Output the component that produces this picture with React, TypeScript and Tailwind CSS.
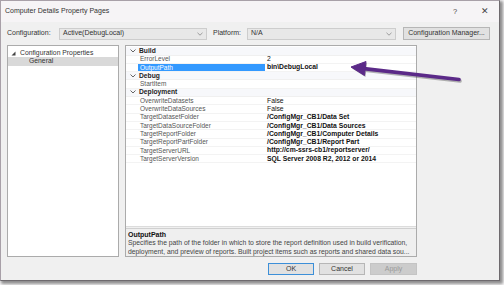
import React from "react";

const rows: { kind: "cat" | "prop"; name: string; value?: string; bold?: boolean; selected?: boolean }[] = [
  { kind: "cat", name: "Build" },
  { kind: "prop", name: "ErrorLevel", value: "2" },
  { kind: "prop", name: "OutputPath", value: "bin\\DebugLocal", bold: true, selected: true },
  { kind: "cat", name: "Debug" },
  { kind: "prop", name: "StartItem", value: "" },
  { kind: "cat", name: "Deployment" },
  { kind: "prop", name: "OverwriteDatasets", value: "False" },
  { kind: "prop", name: "OverwriteDataSources", value: "False" },
  { kind: "prop", name: "TargetDatasetFolder", value: "/ConfigMgr_CB1/Data Set", bold: true },
  { kind: "prop", name: "TargetDataSourceFolder", value: "/ConfigMgr_CB1/Data Sources", bold: true },
  { kind: "prop", name: "TargetReportFolder", value: "/ConfigMgr_CB1/Computer Details", bold: true },
  { kind: "prop", name: "TargetReportPartFolder", value: "/ConfigMgr_CB1/Report Part", bold: true },
  { kind: "prop", name: "TargetServerURL", value: "http://cm-ssrs-cb1/reportserver/", bold: true },
  { kind: "prop", name: "TargetServerVersion", value: "SQL Server 2008 R2, 2012 or 2014", bold: true },
];

function Chevron() {
  return (
    <svg width="6" height="4" viewBox="0 0 6 4" className="block">
      <path d="M0.5 0.5 L3 3 L5.5 0.5" fill="none" stroke="#555" strokeWidth="0.9" />
    </svg>
  );
}

function DropChevron() {
  return (
    <svg width="6" height="4" viewBox="0 0 6 4" className="block">
      <path d="M0.5 0.8 L3 3.2 L5.5 0.8" fill="none" stroke="#888" strokeWidth="0.8" />
    </svg>
  );
}

export default function App() {
  return (
    <div className="w-[504px] h-[285px] bg-[#fdfcfd] overflow-hidden relative font-['Liberation_Sans',Arial,sans-serif]">
      <div className="w-[500px] h-[281px] bg-[#f0f0f0] border border-[#a8a0a8] border-r-[#6e6a6e] border-b-[#6e6a6e] shadow-[2px_2px_3px_1px_rgba(0,0,0,0.45)] flex flex-col">
        {/* Title bar */}
        <div className="h-[21px] shrink-0 bg-[#f6f4f6] flex items-center pl-[4px] text-[7px] text-[#333]">
          <span className="flex-1">Computer Details Property Pages</span>
          <span className="w-[10px] text-center text-[7.5px] mr-[20px] text-[#444]">?</span>
          <span className="w-[10px] text-center text-[9px] mr-[9px] text-[#444] font-light">✕</span>
        </div>
        {/* Config row */}
        <div className="h-[13px] mt-[5px] shrink-0 flex items-center text-[7px] text-[#333]">
          <span className="ml-[6px] w-[52px]">Configuration:</span>
          <div className="w-[148px] h-[12px] bg-[#e8e8e8] border border-[#cdcdcd] flex items-center pl-[3px] pr-[3px]">
            <span className="flex-1">Active(DebugLocal)</span>
            <DropChevron />
          </div>
          <span className="ml-[6px] w-[34px]">Platform:</span>
          <div className="w-[149px] h-[12px] bg-[#e8e8e8] border border-[#cdcdcd] flex items-center pl-[3px] pr-[3px]">
            <span className="flex-1">N/A</span>
            <DropChevron />
          </div>
          <div className="ml-[7px] w-[87px] h-[13px] bg-[#e1e1e1] border border-[#b6b6b6] flex items-center justify-center">
            Configuration Manager...
          </div>
        </div>
        {/* Panels */}
        <div className="flex mt-[5px] h-[212px] shrink-0">
          {/* Tree */}
          <div className="ml-[6px] w-[112px] bg-white border border-[#ababab] pt-[3px] text-[6.8px] text-[#333]">
            <div className="h-[8px] flex items-center pl-[3px]">
              <svg width="5" height="5" viewBox="0 0 5 5" className="mr-[4px]">
                <path d="M4.5 0.5 L4.5 4.5 L0.5 4.5 Z" fill="#444" />
              </svg>
              <span>Configuration Properties</span>
            </div>
            <div className="h-[9px] flex items-center pl-[21px] bg-[#d9d9d9]">General</div>
          </div>
          {/* Grid + description */}
          <div className="ml-[6px] w-[292px] flex flex-col border border-[#ababab]">
            <div className="h-[182px] bg-white pt-[1.3px]">
              {rows.map((r, i) =>
                r.kind === "cat" ? (
                  <div key={i} className="h-[8.3px] flex items-center bg-[#f7f8fb] border-b border-[#f0f0f0]">
                    <div className="w-[13px] flex justify-center pl-[1px]">
                      <Chevron />
                    </div>
                    <span className="font-bold text-[6.7px] text-[#222]">{r.name}</span>
                  </div>
                ) : (
                  <div key={i} className="h-[8.3px] flex items-center border-b border-[#f3f3f3]">
                    <div className="w-[12px]" />
                    <div
                      className={
                        "w-[127px] h-full flex items-center pl-[2px] text-[6.5px] " +
                        (r.selected ? "bg-[#3399ff] text-white" : "text-[#555]")
                      }
                    >
                      {r.name}
                    </div>
                    <div
                      className={
                        "pl-[2px] text-[6.8px] text-[#111] whitespace-nowrap " + (r.bold ? "font-bold" : "")
                      }
                    >
                      {r.value}
                    </div>
                  </div>
                )
              )}
            </div>
            <div className="h-[2px] bg-[#f0f0f0] border-t border-[#dcdcdc]" />
            <div className="flex-1 bg-[#efefef] border-t border-[#d0d0d0] px-[2px] pt-[2px] text-[6.8px] text-[#444] leading-[8.4px]">
              <div className="font-bold text-[7px] text-[#111]">OutputPath</div>
              <div className="whitespace-nowrap">
                Specifies the path of the folder in which to store the report definition used in build verification,
              </div>
              <div className="whitespace-nowrap">
                deployment, and preview of reports. Built project items such as reports and shared data sou...
              </div>
            </div>
          </div>
        </div>
        {/* Buttons */}
        <div className="flex justify-end gap-[5px] mt-[6px] mr-[82px] text-[7px]">
          <div className="w-[46px] h-[12px] bg-[#e1e1e1] border border-[#3c8fd8] flex items-center justify-center text-[#333]">
            OK
          </div>
          <div className="w-[46px] h-[12px] bg-[#e1e1e1] border border-[#b6b6b6] flex items-center justify-center text-[#333]">
            Cancel
          </div>
          <div className="w-[47px] h-[12px] bg-[#cccccc] border border-[#c4c4c4] flex items-center justify-center text-[#9a9a9a]">
            Apply
          </div>
        </div>
      </div>
      {/* Annotation arrow */}
      <svg className="absolute left-0 top-0 pointer-events-none" width="504" height="285" viewBox="0 0 504 285">
        <g opacity="0.35" transform="translate(1,1.5)">
          <line x1="364" y1="68.6" x2="459" y2="79.5" stroke="#333" strokeWidth="3.6" strokeLinecap="round" />
          <polygon points="351,67 366,61.5 364.5,75.5" fill="#333" />
        </g>
        <line x1="364" y1="68.6" x2="459" y2="79.5" stroke="#5b2a88" strokeWidth="3.6" strokeLinecap="round" />
        <polygon points="351,67 366,61.5 364.5,75.5" fill="#5b2a88" strokeLinejoin="round" stroke="#5b2a88" strokeWidth="1" />
      </svg>
    </div>
  );
}
